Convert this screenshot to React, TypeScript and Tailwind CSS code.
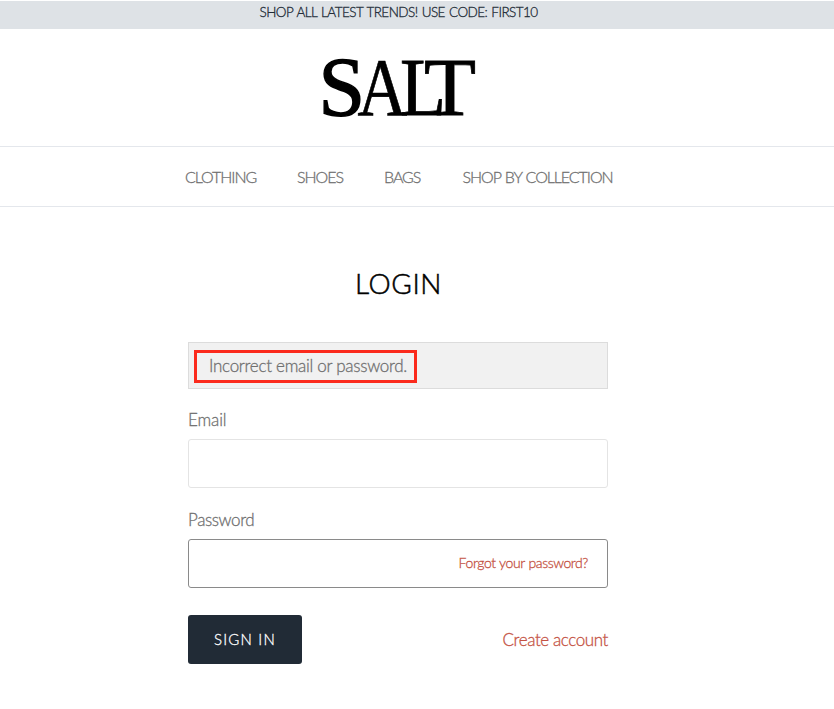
const navItems = [
  { label: 'CLOTHING', cls: 'w-[72px]' },
  { label: 'SHOES', cls: 'w-[47px]' },
  { label: 'BAGS', cls: 'w-[38.5px]' },
  { label: 'SHOP BY COLLECTION', cls: 'w-[150px]' },
];

function Logo() {
  return (
    <svg width="156" height="66" viewBox="0 0 156 66" overflow="visible" role="img" aria-label="SALT">
      <g fontFamily="'Liberation Serif', serif" fontSize="82" fill="#000" stroke="#000">
        <text transform="translate(-2.5 58.5) scale(1.02 1.02)" strokeWidth="1.4">S</text>
        <text transform="translate(36.5 58) scale(0.84 1)" strokeWidth="0.7">A</text>
        <text transform="translate(79 58) scale(0.92 1)" strokeWidth="0.8">L</text>
        <text transform="translate(103 58) scale(1.04 1)" strokeWidth="0.8">T</text>
      </g>
    </svg>
  );
}

export default function App() {
  return (
    <div className="h-[709px] w-[834px] overflow-hidden bg-white pt-px font-['Lato',sans-serif] font-light text-[#707070] [-webkit-text-stroke:0.3px]">
      <div className="flex h-[28px] justify-center bg-[#dee2e6] pr-[37px] text-[13.5px] leading-[22px] tracking-[-0.55px] [word-spacing:1px] text-[#212b36]">
        <span className="whitespace-nowrap">SHOP ALL LATEST TRENDS! USE CODE: FIRST10</span>
      </div>
      <header className="flex h-[117px] justify-center pt-[28px] pr-[36px]">
        <Logo />
      </header>
      <nav className="flex h-[61px] items-center gap-[40px] border-y border-[#e4e7ec] pl-[185px] text-[16px] tracking-[-1.05px] [word-spacing:1px]">
        {navItems.map((n) => (
          <a key={n.label} className={`whitespace-nowrap ${n.cls}`}>{n.label}</a>
        ))}
      </nav>
      <main className="ml-[188px] flex w-[420px] flex-col">
        <h1 className="mt-[56px] pl-px text-center text-[28px] leading-[40px] tracking-[0.6px] text-black [-webkit-text-stroke:0.5px]">LOGIN</h1>
        <div className="mt-[39px] h-[47px] border border-[#dcdcdc] bg-[#f1f1f1] pt-[7px] pl-[5px]">
          <div className="flex h-[33px] w-[223px] items-center border-[3px] border-[#fb2a1c] pb-px pl-[12px] text-[17px] tracking-[-0.28px] whitespace-nowrap">
            Incorrect email or password.
          </div>
        </div>
        <label className="mt-[19px] text-[17px] leading-[24px] tracking-[-0.1px]">Email</label>
        <input aria-label="Email" className="mt-[7px] h-[49px] rounded-[3px] border border-[#e4e4e4] outline-none" />
        <label className="mt-[20px] text-[17px] leading-[24px] tracking-[-0.4px]">Password</label>
        <div className="mt-[7px] flex h-[49px] items-center justify-end rounded-[3px] border border-[#8a8a8a] pr-[19px] pb-[2px] text-[14px] tracking-[-0.4px] [word-spacing:0.5px] text-[#c45243]">
          <a className="whitespace-nowrap">Forgot your password?</a>
        </div>
        <div className="mt-[27px] flex items-center justify-between">
          <button className="h-[49px] w-[114px] rounded-[3px] bg-[#212b36] text-[15px] tracking-[1.2px] whitespace-nowrap text-white">SIGN IN</button>
          <a className="text-[17px] tracking-[-0.4px] whitespace-nowrap text-[#c45243]">Create account</a>
        </div>
      </main>
    </div>
  );
}
